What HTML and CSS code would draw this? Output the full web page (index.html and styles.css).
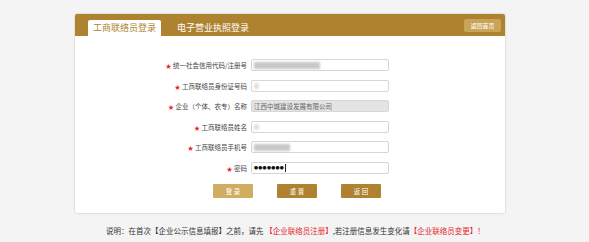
FILE: index.html
```html
<!DOCTYPE html>
<html lang="zh-cn">
<head>
    <meta charset="UTF-8">
    <title>企业联络员登录</title>
    <link rel="stylesheet" href="styles.css">
</head>
<body>
    <div class="panel">
        <div class="panel-head">
            <div class="tabs">
                <span class="tab active">工商联络员登录</span>
                <span class="tab">电子营业执照登录</span>
            </div>
            <a class="home-btn" href="#">返回首页</a>
        </div>
        <form class="login-form">
            <div class="form-row">
                <label><span class="star">★</span> 统一社会信用代码/注册号</label>
                <div class="field"><span class="blur" style="width: 66px;"></span></div>
            </div>
            <div class="form-row">
                <label><span class="star">★</span> 工商联络员身份证号码</label>
                <div class="field"><span class="blur dot"></span></div>
            </div>
            <div class="form-row">
                <label><span class="star">★</span> 企业（个体、农专）名称</label>
                <div class="field disabled">江西中城建设发展有限公司</div>
            </div>
            <div class="form-row">
                <label><span class="star">★</span> 工商联络员姓名</label>
                <div class="field"><span class="blur dot"></span></div>
            </div>
            <div class="form-row">
                <label><span class="star">★</span> 工商联络员手机号</label>
                <div class="field"><span class="blur" style="width: 36px;"></span></div>
            </div>
            <div class="form-row">
                <label><span class="star">★</span> 密码</label>
                <div class="field"><span class="pwd">●●●●●●●</span><span class="caret"></span></div>
            </div>
            <div class="btn-row">
                <button type="button" class="btn light">登 录</button>
                <button type="button" class="btn">重 置</button>
                <button type="button" class="btn">返 回</button>
            </div>
        </form>
    </div>
    <p class="note">说明：在首次【企业公示信息填报】之前，请先 <span class="red">【企业联络员注册】</span>,若注册信息发生变化请<span class="red">【企业联络员变更】！</span></p>
</body>
</html>
```

FILE: styles.css
```css
:root {
    --gold: #ae822f;
    --gold-light: #d1ad62;
    --bg: #f4f4f4;
    --label: #444;
    --border: #d6d6d6;
    --red: #e8262c;
}
body {
    margin: 0;
    background-color: var(--bg);
    font-family: "Noto Sans CJK SC", "Noto Sans", sans-serif;
    color: var(--label);
}
.panel {
    margin: 14px 0 0 75px;
    width: 430px;
    background: #fff;
    box-shadow: 0 0 2px rgba(0, 0, 0, 0.25);
    border-radius: 2px;
}
.panel-head {
    height: 22px;
    background-color: var(--gold);
    display: flex;
    justify-content: space-between;
    align-items: flex-start;
    border-radius: 2px 2px 0 0;
}
.tabs {
    display: flex;
    align-items: flex-end;
    height: 22px;
    padding-left: 13px;
}
.tab {
    font-size: 9px;
    line-height: 16px;
    color: #fff;
    padding: 0 5px;
    margin-right: 11px;
    white-space: nowrap;
}
.tab.active {
    background: #fff;
    color: var(--gold);
    border-radius: 2px 2px 0 0;
}
.home-btn {
    margin: 5px 4px 0 0;
    width: 37px;
    height: 13px;
    line-height: 13px;
    text-align: center;
    font-size: 6px;
    color: #fff;
    text-decoration: none;
    background-color: #c9a357;
    border-radius: 2px;
}
.login-form {
    padding: 23px 0 15px;
}
.form-row {
    display: grid;
    grid-template-columns: 172px 138px;
    column-gap: 4px;
    align-items: center;
    margin-bottom: 8.5px;
}
.form-row label {
    text-align: right;
    font-size: 6.5px;
    color: var(--label);
    white-space: nowrap;
}
.star {
    color: var(--red);
    font-size: 6px;
}
.field {
    height: 12px;
    border: 1px solid var(--border);
    border-radius: 2px;
    box-sizing: border-box;
    display: flex;
    align-items: center;
    padding-left: 2px;
    font-size: 6.5px;
    color: #666;
    background: #fff;
}
.field.disabled {
    background-color: #e4e4e4;
}
.blur {
    display: inline-block;
    height: 7px;
    background-color: #c8c8c8;
    filter: blur(1.2px);
}
.blur.dot {
    width: 5px;
    height: 6px;
    background-color: #ddd;
    border-radius: 3px;
}
.pwd {
    font-size: 4px;
    letter-spacing: 0.3px;
    color: #111;
}
.caret {
    display: inline-block;
    width: 1px;
    height: 8px;
    background: #222;
    margin-left: 1px;
}
.btn-row {
    display: flex;
    gap: 24px;
    padding-left: 138px;
    margin-top: 10px;
}
.btn {
    width: 40px;
    height: 14px;
    border: none;
    border-radius: 1px;
    background-color: var(--gold);
    color: #fff;
    font-family: inherit;
    font-size: 6.5px;
    padding: 0;
    cursor: pointer;
}
.btn.light {
    background-color: var(--gold-light);
}
.note {
    margin: 12px 0 0;
    padding-left: 106px;
    font-size: 7.5px;
    color: #333;
}
.red {
    color: var(--red);
}
```
